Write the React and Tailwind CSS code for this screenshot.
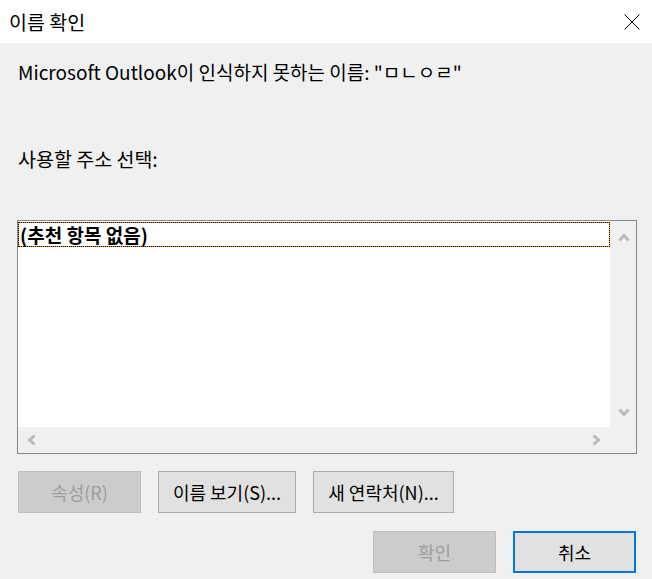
import React from "react";

const Chev = ({ dir, className }) => {
  const pts = {
    up: "1.5,8.5 6,3.5 10.5,8.5",
    down: "1.5,1.5 6,6.5 10.5,1.5",
    left: "7.5,1.5 2.5,6 7.5,10.5",
    right: "2.5,1.5 7.5,6 2.5,10.5",
  }[dir];
  const vb = dir === "up" || dir === "down" ? "0 0 12 10" : "0 0 10 12";
  const w = dir === "up" || dir === "down" ? 12 : 10;
  const h = dir === "up" || dir === "down" ? 10 : 12;
  return (
    <svg width={w} height={h} viewBox={vb} className={className}>
      <polyline points={pts} fill="none" stroke="#bcbcbc" strokeWidth="3" strokeLinejoin="miter" />
    </svg>
  );
};

export default function App() {
  return (
    <div className="w-[652px] h-[579px] bg-[#f0f0f0] font-['Noto_Sans_CJK_KR',sans-serif] text-black flex flex-col overflow-hidden">
      <div className="h-[43px] bg-white flex items-center justify-between pl-[9px] pr-[12px] shrink-0">
        <span className="text-[19.5px] leading-none">이름 확인</span>
        <svg width="16" height="16" viewBox="0 0 16 16">
          <path d="M0.5 0.5 L15.5 15.5 M15.5 0.5 L0.5 15.5" stroke="#000" strokeWidth="1" fill="none" />
        </svg>
      </div>
      <div className="pl-[18px] pt-[16px] h-[26px] box-content text-[19px] leading-[26px] whitespace-nowrap">
        Microsoft Outlook이 인식하지 못하는 이름: "ㅁㄴㅇㄹ"
      </div>
      <div className="pl-[18px] pt-[61px] h-[26px] box-content text-[19.5px] leading-[26px]">
        사용할 주소 선택:
      </div>
      <div className="ml-[17px] mt-[48px] w-[620px] h-[234px] border border-[#828790] grid grid-cols-[1fr_26px] grid-rows-[1fr_26px] shrink-0">
        <div className="bg-white pt-[1px]">
          <div className="h-[25px] border border-dotted border-black bg-[#f08c00]">
            <div className="h-full bg-white flex items-center text-[19px] font-bold leading-none pl-[1px]">
              (추천 항목 없음)
            </div>
          </div>
        </div>
        <div className="bg-[#f0f0f0] flex flex-col items-center justify-between pt-[11px] pb-[9px] pl-[1px]">
          <Chev dir="up" />
          <Chev dir="down" />
        </div>
        <div className="bg-[#f0f0f0] flex items-center justify-between pl-[9px] pr-[9px] pb-[1px]">
          <Chev dir="left" />
          <Chev dir="right" />
        </div>
        <div className="bg-[#f0f0f0]" />
      </div>
      <div className="flex gap-[17px] pl-[18px] mt-[17px]">
        <div className="w-[123px] h-[42px] border border-[#bfbfbf] bg-[#cccccc] text-[#9d9d9d] flex items-center justify-center text-[18px]">
          속성(R)
        </div>
        <div className="w-[138px] h-[42px] border border-[#adadad] bg-[#e1e1e1] flex items-center justify-center text-[18px]">
          이름 보기(S)...
        </div>
        <div className="w-[141px] h-[42px] border border-[#adadad] bg-[#e1e1e1] flex items-center justify-center text-[18px]">
          새 연락처(N)...
        </div>
      </div>
      <div className="flex gap-[17px] justify-end pr-[16px] mt-[18px]">
        <div className="w-[123px] h-[42px] border border-[#bfbfbf] bg-[#cccccc] text-[#9d9d9d] flex items-center justify-center text-[18px]">
          확인
        </div>
        <div className="w-[123px] h-[42px] border-2 border-[#0078d7] bg-[#e1e1e1] flex items-center justify-center text-[18px]">
          취소
        </div>
      </div>
    </div>
  );
}
